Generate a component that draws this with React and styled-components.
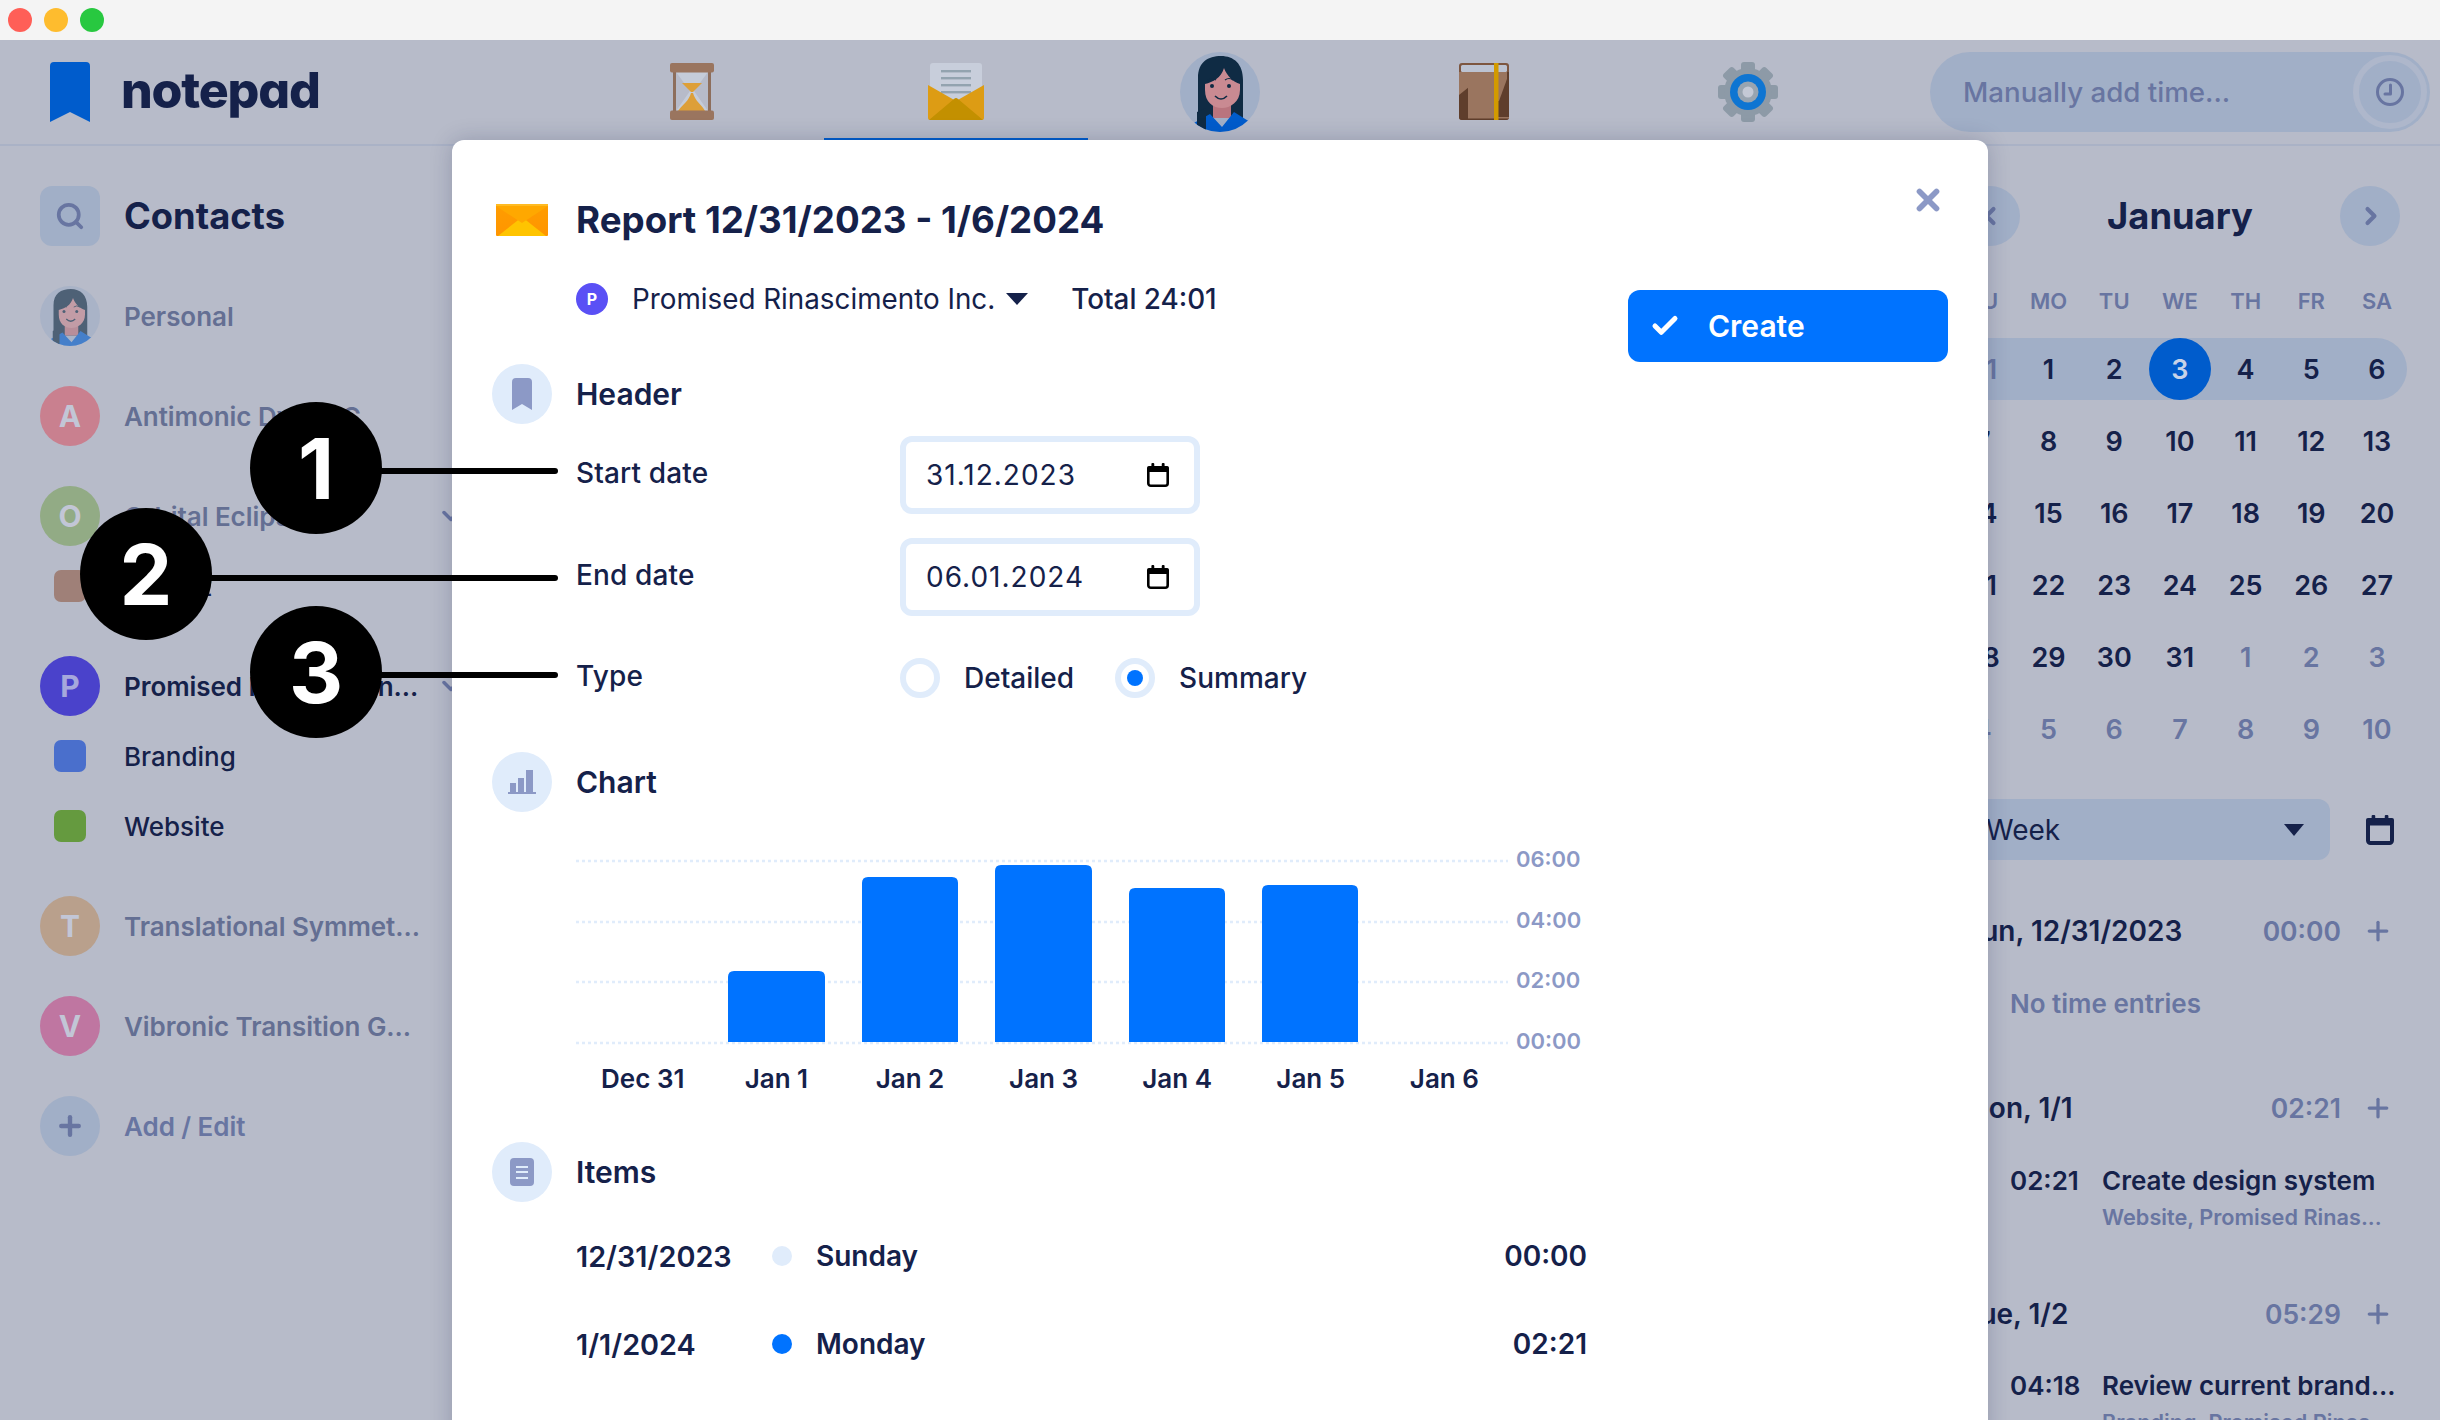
import React from "react";
import styled, { createGlobalStyle } from "styled-components";
import { Search, ChevronDown, ChevronLeft, ChevronRight, Plus, Check, X } from "lucide-react";

const ink = "#15214a";
const dimMuted = "#6875a1";
const dimPanel = "#a1afc7";
const dimBg = "#b7bbc9";
const dimBrand = "#005ccc";
const brand = "#0073ff";
const pale = "#e0ecfb";
const muted = "#8c99c6";

const Global = createGlobalStyle`
  html, body { margin: 0; padding: 0; width: 2440px; height: 1420px; overflow: hidden; background: ${dimBg}; }
  body { font-family: Inter, "Noto Sans", sans-serif; color: ${ink}; }
  * { box-sizing: border-box; }
`;

const Page = styled.div`
  position: relative; width: 2440px; height: 1420px; overflow: hidden;
  display: flex; flex-direction: column; background: ${dimBg};
`;
const TitleBar = styled.div`
  height: 40px; flex: none; background: #f4f4f4; display: flex; align-items: center; gap: 12px; padding-left: 8px;
`;
const Light = styled.span`
  width: 24px; height: 24px; border-radius: 50%; background: ${p => p.$c};
`;
const TopBar = styled.header`
  height: 106px; flex: none; display: flex; padding: 12px 10px 0 50px; border-bottom: 2px solid #aab2c6;
`;
const Logo = styled.div`
  width: 510px; height: 80px; display: flex; align-items: flex-start; gap: 31px; padding-top: 10px;
`;
const LogoText = styled.span`
  font-size: 50px; font-weight: 800; line-height: 56px; letter-spacing: -1.2px; font-feature-settings: "cv11";
`;
const Tabs = styled.nav`display: flex; height: 88px; margin-right: 50px;`;
const Tab = styled.div`
  width: 264px; height: 88px; display: flex; justify-content: center; padding-top: ${p => p.$pt}px;
  border-bottom: 2px solid ${p => (p.$active ? dimBrand : "transparent")};
`;
const TimeInput = styled.div`
  width: 500px; height: 80px; border-radius: 40px; background: ${dimPanel}; color: ${dimMuted};
  font-size: 27.7px; font-weight: 500; display: flex; align-items: center; justify-content: space-between;
  padding: 0 3px 0 33px;
`;
const ClockBtn = styled.div`
  width: 74px; height: 74px; border-radius: 50%; background: ${dimPanel}; border: 6px solid #aeb7cb;
  display: flex; align-items: center; justify-content: center;
`;

const Main = styled.div`flex: 1; display: flex; justify-content: space-between; min-height: 0;`;
const Sidebar = styled.aside`width: 452px; padding: 40px 0 0 40px; flex: none; overflow: hidden;`;
const SideHead = styled.div`display: flex; align-items: center; gap: 24px; height: 60px; margin-bottom: 20px;`;
const SearchBtn = styled.div`
  width: 60px; height: 60px; border-radius: 12px; background: ${dimPanel}; color: ${dimMuted};
  display: flex; align-items: center; justify-content: center;
`;
const PanelTitle = styled.h2`margin: 0; font-size: 36.3px; font-weight: 700; line-height: 44px;`;
const ContactRow = styled.div`
  height: 100px; display: flex; align-items: center; gap: 24px; position: relative; white-space: nowrap;
`;
const Circle = styled.div`
  width: 60px; height: 60px; flex: none; border-radius: 50%; background: ${p => p.$bg};
  color: ${p => p.$fg || "#c2c6d6"}; font-size: 30px; font-weight: 700;
  display: flex; align-items: center; justify-content: center;
`;
const ContactName = styled.span`
  font-size: 26px; font-weight: 600; letter-spacing: -0.05px; color: ${p => p.$c || "#646f93"};
`;
const Fold = styled.span`
  position: absolute; left: 397px; top: 50%; margin-top: -14px; color: ${dimMuted}; display: flex;
`;
const SubRow = styled.div`
  height: 40px; margin-bottom: 30px; display: flex; align-items: center; gap: 38px; padding-left: 14px; white-space: nowrap;
`;
const Square = styled.span`width: 32px; height: 32px; flex: none; border-radius: 7px; background: ${p => p.$bg};`;
const SubName = styled.span`font-size: 26px; font-weight: 500;`;

const RightPanel = styled.aside`width: 490px; flex: none; padding-top: 40px; overflow: hidden;`;
const MonthNav = styled.div`
  display: flex; align-items: center; justify-content: space-between; margin: 0 40px 0 10px; height: 60px;
`;
const RoundBtn = styled.div`
  width: 60px; height: 60px; border-radius: 50%; background: ${dimPanel}; color: ${dimMuted};
  display: flex; align-items: center; justify-content: center; padding-left: ${p => p.$shift || 0}px;
`;
const WeekHead = styled.div`
  display: grid; grid-template-columns: repeat(7, 65.7px); height: 30px; margin-top: 40px; margin-bottom: 22px;
  font-size: 22px; font-weight: 600; color: ${dimMuted}; text-align: center; line-height: 30px;
`;
const Week = styled.div`
  display: grid; grid-template-columns: repeat(7, 65.7px); height: 62px; margin-bottom: 10px; width: 457px;
  border-radius: 31px; background: ${p => (p.$active ? dimPanel : "transparent")};
`;
const Day = styled.div`
  width: 62px; height: 62px; justify-self: center; border-radius: 50%;
  display: flex; align-items: center; justify-content: center; font-size: 27px; font-weight: 600;
  color: ${p => (p.$sel ? "#c7d3e8" : p.$off ? dimMuted : ink)};
  background: ${p => (p.$sel ? dimBrand : "transparent")};
`;
const SelectRow = styled.div`display: flex; align-items: center; gap: 36px; margin: 39px 0 0 3px;`;
const Select = styled.div`
  width: 377px; height: 61px; border-radius: 12px; background: ${dimPanel}; font-size: 28px;
  display: flex; align-items: center; justify-content: space-between; padding: 0 26px 0 33px;
`;
const Caret = styled.span`
  width: 0; height: 0; border-left: ${p => p.$w / 2}px solid transparent; border-right: ${p => p.$w / 2}px solid transparent;
  border-top: ${p => p.$h}px solid ${ink}; flex: none;
`;
const DayHeader = styled.div`
  width: 425px; height: 40px; margin: ${p => p.$mt}px 0 0 13px; display: flex; align-items: center;
  font-size: 28px; font-weight: 600; white-space: nowrap;
`;
const DayTotal = styled.span`margin-left: auto; margin-right: 22px; color: ${dimMuted}; font-size: 26.5px;`;
const PlusMark = styled.span`color: ${dimMuted}; display: flex; margin-right: -5px;`;
const NoEntries = styled.div`
  margin: 38px 0 0 60px; font-size: 26px; font-weight: 600; color: ${dimMuted}; line-height: 30px;
`;
const Entry = styled.div`
  margin: ${p => p.$mt}px 0 0 60px; display: grid; grid-template-columns: 92px auto; justify-content: start;
  font-size: 26px; font-weight: 600; line-height: 34px; white-space: nowrap;
`;
const EntrySub = styled.div`
  grid-column: 2; margin-top: 5px; font-size: 21.7px; line-height: 28px; color: ${dimMuted};
`;

const Modal = styled.section`
  position: absolute; left: 452px; top: 140px; width: 1536px; height: 1400px; background: #fff;
  border-radius: 12px 12px 0 0; box-shadow: 0 0 22px rgba(21, 33, 74, 0.22);
  display: grid; grid-template-columns: 1095px 320px; justify-content: space-between;
  padding: 50px 40px 0 40px;
`;
const Body = styled.div`min-width: 0;`;
const Aside = styled.div`display: flex; flex-direction: column; align-items: flex-end;`;
const CloseBtn = styled.div`color: ${muted}; height: 24px; margin: -2px 3px 0 0; display: flex; align-items: center; justify-content: center;`;
const CreateBtn = styled.div`
  width: 320px; height: 72px; margin-top: 78px; border-radius: 12px; background: ${brand}; color: #fff;
  font-size: 30px; font-weight: 600; display: flex; align-items: center; gap: 28px; padding-left: 22px;
`;
const Heading = styled.div`
  display: grid; grid-template-columns: 60px auto; column-gap: 24px; justify-content: start; align-items: center;
  height: 60px; margin-top: ${p => p.$mt || 0}px;
`;
const IconSlot = styled.div`
  width: 60px; height: 60px; display: flex; align-items: center; justify-content: center;
  border-radius: 50%; background: ${p => (p.$plain ? "transparent" : pale)};
`;
const ModalTitle = styled.h1`margin: 0; font-size: 36.7px; font-weight: 700; line-height: 46px;`;
const SectionTitle = styled.h3`margin: 0; font-size: 30px; font-weight: 600; line-height: 38px;`;
const Meta = styled.div`
  height: 32px; margin: 33px 0 0 84px; display: flex; align-items: center; font-size: 27.8px; white-space: nowrap;
`;
const ClientDot = styled.span`
  width: 32px; height: 32px; border-radius: 50%; background: #5a50f5; color: #fff; font-size: 16px; font-weight: 700;
  display: flex; align-items: center; justify-content: center; margin-right: 24px;
`;
const MetaCaret = styled.span`margin: 0 43px 0 11px; display: flex;`;
const Total = styled.span`font-weight: 500;`;
const Field = styled.div`
  display: grid; grid-template-columns: 324px auto; justify-content: start; align-items: center;
  margin: ${p => p.$mt}px 0 0 84px; font-size: 28px; font-weight: 500; letter-spacing: 0.15px;
`;
const FieldLabel = styled.span`margin-top: -4px;`;
const DateBox = styled.div`
  width: 300px; height: 78px; border: 6px solid ${pale}; border-radius: 12px;
  display: flex; align-items: center; justify-content: space-between; padding: 0 25px 0 20px;
  font-size: 28px; font-weight: 400; letter-spacing: 1px;
`;
const Radios = styled.div`display: flex; align-items: center;`;
const Radio = styled.span`
  width: 40px; height: 40px; border-radius: 50%; border: 6px solid ${pale}; flex: none;
  display: flex; align-items: center; justify-content: center; margin-right: 24px;
  &::after { content: ""; width: 16px; height: 16px; border-radius: 50%; background: ${p => (p.$on ? brand : "transparent")}; }
`;
const RadioText = styled.span`margin-right: 41px; letter-spacing: 0;`;
const Chart = styled.div`margin: 37px 0 0 84px;`;
const Plot = styled.div`display: flex; gap: 8px; height: 206px;`;
const YAxis = styled.div`
  display: flex; flex-direction: column; justify-content: space-between; font-size: 22px; font-weight: 600;
  color: ${muted}; line-height: 24px; margin: -2px 0 2px;
`;
const XAxis = styled.div`
  display: grid; grid-template-columns: repeat(7, 133.6px); margin-top: 9px; height: 30px;
  font-size: 26px; font-weight: 600; line-height: 30px; text-align: center;
`;
const ItemRows = styled.div`margin: 10px 0 0 84px;`;
const ItemRow = styled.div`
  height: 88px; display: flex; align-items: center; font-size: 28px; font-weight: 600; white-space: nowrap;
`;
const ItemDate = styled.span`width: 196px; font-size: 28.8px;`;
const ItemDot = styled.span`width: 20px; height: 20px; border-radius: 50%; background: ${p => p.$c}; margin-right: 24px;`;
const ItemTime = styled.span`margin-left: auto;`;

const Callout = styled.div`
  position: absolute; left: ${p => p.$x}px; top: ${p => p.$y}px; display: flex; align-items: center;
`;
const Badge = styled.div`
  width: 132px; height: 132px; border-radius: 50%; background: #000; color: #fff; flex: none;
  display: flex; align-items: center; justify-content: center; font-size: 84px; font-weight: 700;
`;
const Leader = styled.div`
  width: ${p => p.$w}px; height: 6px; margin: ${p => p.$dy}px 0 0 -1px; background: #000; border-radius: 0 3px 3px 0;
`;

const Bookmark = ({ w, h, c, notch }) => (
  <svg width={w} height={h} viewBox={`0 0 ${w} ${h}`}>
    <path d={`M0 4Q0 0 4 0H${w - 4}Q${w} 0 ${w} 4V${h}L${w / 2} ${h - notch}L0 ${h}Z`} fill={c} />
  </svg>
);

const Hourglass = () => (
  <svg width="44" height="57" viewBox="0 0 44 57">
    <rect x="3" y="5" width="3" height="47" fill="#8d6e5c" />
    <rect x="38" y="5" width="3" height="47" fill="#8d6e5c" />
    <path d="M6 9H38L24 28L38 48H6L20 28Z" fill="#c5ccd9" />
    <path d="M12 20H32L23 29H21Z" fill="#dd9f38" />
    <path d="M21 30H23C25 38 32 42 35 48H8C12 42 19 38 21 30Z" fill="#dd9f38" />
    <rect width="44" height="9.5" rx="2" fill="#9a755f" />
    <rect y="47.5" width="44" height="9.5" rx="2" fill="#9a755f" />
  </svg>
);

const MailOpen = () => (
  <svg width="56" height="57" viewBox="0 0 56 57">
    <rect x="2" width="52" height="44" rx="3" fill="#c8cedb" />
    <g fill="#93a3af">
      <rect x="13" y="7" width="30" height="2.4" />
      <rect x="13" y="14" width="30" height="2.4" />
      <rect x="13" y="21" width="30" height="2.4" />
      <rect x="13" y="28" width="30" height="2.4" />
    </g>
    <path d="M0 22L28 38L56 22V55Q56 57 54 57H2Q0 57 0 55Z" fill="#dd9c14" />
    <path d="M1 57L26 36Q28 34 30 36L55 57Z" fill="#c39000" />
  </svg>
);

const ClosedMail = () => (
  <svg width="52" height="32" viewBox="0 0 52 32">
    <defs>
      <linearGradient id="mb" x1="0" y1="0" x2="0" y2="1">
        <stop offset="0" stopColor="#ff9d00" />
        <stop offset="1" stopColor="#ff9500" />
      </linearGradient>
    </defs>
    <rect width="52" height="32" rx="1" fill="url(#mb)" />
    <path d="M2 32L26 13L50 32Z" fill="#ffc400" />
    <path d="M0 0H52V2L26 19L0 2Z" fill="#ffa800" />
    <rect width="52" height="2" fill="#ffbb22" />
  </svg>
);

const Face = ({ size = 80, faded, id }) => (
  <svg width={size} height={size} viewBox="0 0 80 80" style={faded ? { opacity: 0.62 } : undefined}>
    <defs>
      <clipPath id={id}><circle cx="40" cy="40" r="40" /></clipPath>
    </defs>
    <g clipPath={`url(#${id})`}>
      <rect width="80" height="80" fill={dimPanel} />
      <path d="M18 78V26C18 10 28 4 41 4C54 4 63 12 63 28V66H18Z" fill="#0f2b44" />
      <rect x="33" y="48" width="18" height="18" fill="#b9747e" />
      <path d="M25 32C33 30 41 26 44 16C47 24 53 30 60 32V38C60 50 50 56 42 56C33 56 25 50 25 38Z" fill="#c98a92" />
      <path d="M12 72L30 62L42 75L54 60L70 70V80H12Z" fill={dimBrand} />
      <path d="M17 60L26 56V80H17Z" fill="#0f2b44" />
      <circle cx="32" cy="34" r="2" fill="#0f2b44" />
      <circle cx="49" cy="34" r="2" fill="#0f2b44" />
      <path d="M28 28Q32 25 36 28M45 28Q49 25 53 28" stroke="#0f2b44" strokeWidth="1.2" fill="none" />
      <path d="M35 44Q41 50 47 44" stroke="#0f2b44" strokeWidth="1.6" fill="none" />
    </g>
  </svg>
);

const Book = () => (
  <svg width="50" height="57" viewBox="0 0 50 57">
    <rect width="50" height="57" rx="3" fill="#7d5640" />
    <rect x="2" y="2" width="46" height="7" rx="1.5" fill="#bcc3d2" />
    <path d="M0 9H50V54Q50 57 47 57H3Q0 57 0 54Z" fill="#5f3e2c" />
    <path d="M0 9H10V24L0 32Z" fill="#9a755f" />
    <path d="M9 9H38V54H9Z" fill="#9a755f" />
    <path d="M38 9H48V16L40 38H38Z" fill="#9a755f" />
    <rect x="9" y="54" width="41" height="1.5" fill="#9a755f" />
    <rect x="35" width="4.5" height="57" fill="#d29a00" />
  </svg>
);

const Gear = () => (
  <svg width="60" height="60" viewBox="0 0 60 60">
    <g fill="#8d9aa7">
      {[0, 45, 90, 135, 180, 225, 270, 315].map(a => (
        <rect key={a} x="23" y="0" width="14" height="12" rx="3" transform={`rotate(${a} 30 30)`} />
      ))}
      <circle cx="30" cy="30" r="24" />
    </g>
    <circle cx="30" cy="30" r="18" fill="#0e75d2" />
    <circle cx="30" cy="30" r="10.5" fill="#98a4b0" />
    <circle cx="30" cy="30" r="5.5" fill="#c4c9d5" />
  </svg>
);

const ClockIcon = () => (
  <svg width="30" height="30" viewBox="0 0 30 30" fill="none" stroke={dimMuted} strokeWidth="3">
    <circle cx="15" cy="15" r="12.5" />
    <path d="M15.5 8V17H10" strokeLinecap="round" strokeLinejoin="round" />
  </svg>
);

const CalendarMark = ({ w, h, c, stroke }) => (
  <svg width={w} height={h} viewBox={`0 0 ${w} ${h}`}>
    <rect x={stroke / 2} y={3 + stroke / 2} width={w - stroke} height={h - 3 - stroke} rx="2.5" fill="none" stroke={c} strokeWidth={stroke} />
    <rect x="0" y="3" width={w} height={h * 0.25} rx="2" fill={c} />
    <rect x={w * 0.2} y="0" width={w * 0.13} height="5" rx="1" fill={c} />
    <rect x={w * 0.67} y="0" width={w * 0.13} height="5" rx="1" fill={c} />
  </svg>
);

const BarsIcon = () => (
  <svg width="28" height="24" viewBox="0 0 28 24" fill={muted}>
    <rect x="2" y="13" width="6" height="9" />
    <rect x="10" y="8" width="6" height="14" />
    <rect x="18" y="0" width="7" height="22" />
    <rect y="22" width="28" height="2" />
  </svg>
);

const ListIcon = () => (
  <svg width="24" height="28" viewBox="0 0 24 28">
    <rect width="24" height="28" rx="4" fill={muted} />
    <g fill={pale}>
      <rect x="6" y="8" width="12" height="2" />
      <rect x="6" y="13" width="12" height="2" />
      <rect x="6" y="19" width="12" height="2" />
    </g>
  </svg>
);

const bars = [
  { x: 152, w: 97, top: 122 },
  { x: 286, w: 96, top: 28 },
  { x: 419, w: 97, top: 16 },
  { x: 553, w: 96, top: 39 },
  { x: 686, w: 96, top: 36 },
];
const grid = [12, 73, 133, 194];

const BarChart = () => (
  <svg width="932" height="206" viewBox="0 0 932 206">
    {grid.map(y => (
      <line key={y} x1="0" x2="932" y1={y} y2={y} stroke={pale} strokeWidth="2.5" strokeDasharray="3 3" />
    ))}
    {bars.map(b => (
      <path
        key={b.x}
        d={`M${b.x} 193V${b.top + 6}Q${b.x} ${b.top} ${b.x + 6} ${b.top}H${b.x + b.w - 6}Q${b.x + b.w} ${b.top} ${b.x + b.w} ${b.top + 6}V193Z`}
        fill={brand}
      />
    ))}
  </svg>
);

const weeks = [
  [["31", 1], ["1"], ["2"], ["3", 0, 1], ["4"], ["5"], ["6"]],
  [["7"], ["8"], ["9"], ["10"], ["11"], ["12"], ["13"]],
  [["14"], ["15"], ["16"], ["17"], ["18"], ["19"], ["20"]],
  [["21"], ["22"], ["23"], ["24"], ["25"], ["26"], ["27"]],
  [["28"], ["29"], ["30"], ["31"], ["1", 1], ["2", 1], ["3", 1]],
  [["4", 1], ["5", 1], ["6", 1], ["7", 1], ["8", 1], ["9", 1], ["10", 1]],
];

const AddMark = () => <PlusMark><Plus size={30} strokeWidth={2.6} /></PlusMark>;

export default function App() {
  return (
    <Page>
      <Global />
      <TitleBar>
        <Light $c="#ff5f57" />
        <Light $c="#febc2e" />
        <Light $c="#28c840" />
      </TitleBar>
      <TopBar>
        <Logo>
          <Bookmark w={40} h={60} c={dimBrand} notch={10} />
          <LogoText>notepad</LogoText>
        </Logo>
        <Tabs>
          <Tab $pt={11}><Hourglass /></Tab>
          <Tab $pt={11} $active><MailOpen /></Tab>
          <Tab $pt={0}><Face id="topface" /></Tab>
          <Tab $pt={11}><Book /></Tab>
          <Tab $pt={10}><Gear /></Tab>
        </Tabs>
        <TimeInput>
          Manually add time...
          <ClockBtn><ClockIcon /></ClockBtn>
        </TimeInput>
      </TopBar>
      <Main>
        <Sidebar>
          <SideHead>
            <SearchBtn><Search size={30} strokeWidth={3} /></SearchBtn>
            <PanelTitle>Contacts</PanelTitle>
          </SideHead>
          <ContactRow><Face size={60} faded id="sideface" /><ContactName>Personal</ContactName></ContactRow>
          <ContactRow><Circle $bg="#c9808f">A</Circle><ContactName>Antimonic Dye LLC</ContactName></ContactRow>
          <ContactRow>
            <Circle $bg="#92ab85">O</Circle><ContactName>Orbital Eclipse Co</ContactName>
            <Fold><ChevronDown size={28} strokeWidth={3} /></Fold>
          </ContactRow>
          <SubRow><Square $bg="#9f8078" /><SubName>Project</SubName></SubRow>
          <ContactRow>
            <Circle $bg="#4a42cb" $fg="#a6a8dc">P</Circle><ContactName $c={ink}>Promised Rinascimen...</ContactName>
            <Fold><ChevronDown size={28} strokeWidth={3} /></Fold>
          </ContactRow>
          <SubRow><Square $bg="#4a6fcc" /><SubName>Branding</SubName></SubRow>
          <SubRow><Square $bg="#659a3f" /><SubName>Website</SubName></SubRow>
          <ContactRow><Circle $bg="#b9a08c">T</Circle><ContactName>Translational Symmet...</ContactName></ContactRow>
          <ContactRow><Circle $bg="#bf76a1">V</Circle><ContactName>Vibronic Transition G...</ContactName></ContactRow>
          <ContactRow>
            <Circle $bg={dimPanel} $fg={dimMuted}><Plus size={30} strokeWidth={3.5} /></Circle>
            <ContactName $c={dimMuted}>Add / Edit</ContactName>
          </ContactRow>
        </Sidebar>
        <RightPanel>
          <MonthNav>
            <RoundBtn><ChevronLeft size={28} strokeWidth={3.5} /></RoundBtn>
            <PanelTitle>January</PanelTitle>
            <RoundBtn $shift={2}><ChevronRight size={28} strokeWidth={3.5} /></RoundBtn>
          </MonthNav>
          <WeekHead>
            {["SU", "MO", "TU", "WE", "TH", "FR", "SA"].map(d => <span key={d}>{d}</span>)}
          </WeekHead>
          {weeks.map((w, i) => (
            <Week key={i} $active={i === 0}>
              {w.map(([n, off, sel], j) => <Day key={j} $off={off} $sel={sel}>{n}</Day>)}
            </Week>
          ))}
          <SelectRow>
            <Select>Week<Caret $w={20} $h={12} /></Select>
            <CalendarMark w={28} h={30} c={ink} stroke={4} />
          </SelectRow>
          <DayHeader $mt={51}>
            Sun, 12/31/2023<DayTotal>00:00</DayTotal><AddMark />
          </DayHeader>
          <NoEntries>No time entries</NoEntries>
          <DayHeader $mt={69}>
            Mon, 1/1<DayTotal>02:21</DayTotal><AddMark />
          </DayHeader>
          <Entry $mt={36}>
            <span>02:21</span><span>Create design system</span>
            <EntrySub>Website, Promised Rinas...</EntrySub>
          </Entry>
          <DayHeader $mt={63}>
            Tue, 1/2<DayTotal>05:29</DayTotal><AddMark />
          </DayHeader>
          <Entry $mt={35}>
            <span>04:18</span><span>Review current brand...</span>
            <EntrySub>Branding, Promised Rinas...</EntrySub>
          </Entry>
        </RightPanel>
      </Main>

      <Modal>
        <Body>
          <Heading>
            <IconSlot $plain><ClosedMail /></IconSlot>
            <ModalTitle>Report 12/31/2023 - 1/6/2024</ModalTitle>
          </Heading>
          <Meta>
            <ClientDot>P</ClientDot>
            Promised Rinascimento Inc.
            <MetaCaret><Caret $w={22} $h={12} /></MetaCaret>
            <Total>Total 24:01</Total>
          </Meta>
          <Heading $mt={49}>
            <IconSlot><Bookmark w={20} h={32} c={muted} notch={6} /></IconSlot>
            <SectionTitle>Header</SectionTitle>
          </Heading>
          <Field $mt={12}>
            <FieldLabel>Start date</FieldLabel>
            <DateBox>31.12.2023<CalendarMark w={22} h={24} c="#000" stroke={2.6} /></DateBox>
          </Field>
          <Field $mt={24}>
            <FieldLabel>End date</FieldLabel>
            <DateBox>06.01.2024<CalendarMark w={22} h={24} c="#000" stroke={2.6} /></DateBox>
          </Field>
          <Field $mt={42}>
            <FieldLabel>Type</FieldLabel>
            <Radios>
              <Radio /><RadioText>Detailed</RadioText>
              <Radio $on /><RadioText>Summary</RadioText>
            </Radios>
          </Field>
          <Heading $mt={54}>
            <IconSlot><BarsIcon /></IconSlot>
            <SectionTitle>Chart</SectionTitle>
          </Heading>
          <Chart>
            <Plot>
              <BarChart />
              <YAxis>
                <span>06:00</span><span>04:00</span><span>02:00</span><span>00:00</span>
              </YAxis>
            </Plot>
            <XAxis>
              {["Dec 31", "Jan 1", "Jan 2", "Jan 3", "Jan 4", "Jan 5", "Jan 6"].map(d => <span key={d}>{d}</span>)}
            </XAxis>
          </Chart>
          <Heading $mt={48}>
            <IconSlot><ListIcon /></IconSlot>
            <SectionTitle>Items</SectionTitle>
          </Heading>
          <ItemRows>
            <ItemRow><ItemDate>12/31/2023</ItemDate><ItemDot $c={pale} />Sunday<ItemTime>00:00</ItemTime></ItemRow>
            <ItemRow><ItemDate>1/1/2024</ItemDate><ItemDot $c={brand} />Monday<ItemTime>02:21</ItemTime></ItemRow>
            <ItemRow><ItemDate>1/2/2024</ItemDate><ItemDot $c={brand} />Tuesday<ItemTime>05:29</ItemTime></ItemRow>
          </ItemRows>
        </Body>
        <Aside>
          <CloseBtn><X size={34} strokeWidth={4} /></CloseBtn>
          <CreateBtn><Check size={30} strokeWidth={4} />Create</CreateBtn>
        </Aside>
      </Modal>

      <Callout $x={250} $y={402}><Badge>1</Badge><Leader $w={177} $dy={6} /></Callout>
      <Callout $x={80} $y={508}><Badge>2</Badge><Leader $w={347} $dy={8} /></Callout>
      <Callout $x={250} $y={606}><Badge>3</Badge><Leader $w={177} $dy={5} /></Callout>
    </Page>
  );
}
